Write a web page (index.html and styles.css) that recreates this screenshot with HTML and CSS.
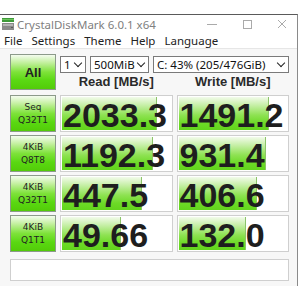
FILE: index.html
```html
<!DOCTYPE html>
<html lang="en">
<head>
    <meta charset="UTF-8">
    <title>CrystalDiskMark 6.0.1 x64</title>
    <link rel="stylesheet" href="styles.css">
</head>
<body>
    <div class="window">
        <div class="titlebar">
            <svg class="app-icon" width="12" height="12" viewBox="0 0 12 12">
                <rect x="0" y="0" width="12" height="4" fill="#3f9a3a"/>
                <rect x="0" y="1" width="12" height="1" fill="#6cc45c"/>
                <rect x="0" y="5" width="12" height="7" fill="#8a8a8a"/>
                <rect x="1" y="6" width="10" height="2" fill="#b4b4b4"/>
                <rect x="9" y="9" width="2" height="1" fill="#5a5a5a"/>
            </svg>
            <span class="title">CrystalDiskMark 6.0.1 x64</span>
            <div class="controls">
                <svg width="10" height="10" viewBox="0 0 10 10"><line x1="0" y1="5.5" x2="10" y2="5.5" stroke="#aaa" stroke-width="1"/></svg>
                <svg width="10" height="10" viewBox="0 0 10 10"><rect x="1.5" y="1.5" width="8" height="8" fill="none" stroke="#aaa" stroke-width="1"/></svg>
                <svg width="10" height="10" viewBox="0 0 10 10"><path d="M1 1 L9 9 M9 1 L1 9" stroke="#aaa" stroke-width="1"/></svg>
            </div>
        </div>

        <div class="menubar">
            <span>File</span>
            <span>Settings</span>
            <span>Theme</span>
            <span>Help</span>
            <span>Language</span>
        </div>

        <div class="main">
            <div class="top">
                <div class="btn all-btn">All</div>
                <div class="top-right">
                    <div class="selects">
                        <div class="select sel-count"><span>1</span><i class="chev"></i></div>
                        <div class="select sel-size"><span>500MiB</span><i class="chev"></i></div>
                        <div class="select sel-drive"><span>C: 43% (205/476GiB)</span><i class="chev"></i></div>
                    </div>
                    <div class="headers">
                        <div class="head">Read [MB/s]</div>
                        <div class="head">Write [MB/s]</div>
                    </div>
                </div>
            </div>

            <div class="rows">
                <div class="row">
                    <div class="btn label">Seq<br>Q32T1</div>
                    <div class="cell"><div class="bar" style="width: 86%"></div><span class="val">2033.3</span></div>
                    <div class="cell"><div class="bar" style="width: 82%"></div><span class="val">1491.2</span></div>
                </div>
                <div class="row">
                    <div class="btn label">4KiB<br>Q8T8</div>
                    <div class="cell"><div class="bar" style="width: 82%"></div><span class="val">1192.3</span></div>
                    <div class="cell"><div class="bar" style="width: 79%"></div><span class="val">931.4</span></div>
                </div>
                <div class="row">
                    <div class="btn label">4KiB<br>Q32T1</div>
                    <div class="cell"><div class="bar" style="width: 72%"></div><span class="val">447.5</span></div>
                    <div class="cell"><div class="bar" style="width: 71%"></div><span class="val">406.6</span></div>
                </div>
                <div class="row">
                    <div class="btn label">4KiB<br>Q1T1</div>
                    <div class="cell"><div class="bar" style="width: 53%"></div><span class="val">49.66</span></div>
                    <div class="cell"><div class="bar" style="width: 61%"></div><span class="val">132.0</span></div>
                </div>
            </div>

            <div class="comment"></div>
        </div>
    </div>
</body>
</html>
```

FILE: styles.css
```css
:root {
    --text-color: #1e1e1e;
    --cell-border: #cfcfcf;
    --window-bg: #f7f7f7;
}

body {
    margin: 0;
    padding: 0;
    background-color: #fff;
    font-family: 'Noto Sans', 'Liberation Sans', sans-serif;
    color: var(--text-color);
}

.window {
    margin-top: 14px;
    width: 297px;
    border-top: 1px solid #5a5a5a;
    border-right: 1px solid #8a8a8a;
    background-color: #fff;
}

.titlebar {
    height: 18px;
    display: flex;
    align-items: center;
    padding-left: 2px;
}

.app-icon {
    margin-right: 3px;
}

.title {
    font-size: 11.5px;
    color: #808080;
}

.controls {
    margin-left: auto;
    display: flex;
    gap: 25px;
    padding-right: 10px;
}

.menubar {
    height: 15px;
    display: flex;
    align-items: center;
    gap: 9px;
    padding-left: 4px;
    font-size: 11.5px;
    color: #222;
    border-bottom: 1px solid #e6e6e6;
}

.main {
    background-color: var(--window-bg);
    padding: 5px 8px 5px 10px;
}

.top {
    display: flex;
    gap: 4px;
    height: 36px;
}

.btn {
    box-sizing: border-box;
    border: 1px solid #8c9a8a;
    background: linear-gradient(to bottom, #f4fcef 0%, #c4f0a0 22%, #7ee23a 50%, #5ad812 75%, #52cc08 100%);
    display: flex;
    align-items: center;
    justify-content: center;
    text-align: center;
    color: #222;
}

.all-btn {
    width: 46px;
    font-family: 'Liberation Sans', Arial, sans-serif;
    font-weight: bold;
    font-size: 13px;
}

.top-right {
    flex: 1;
    display: flex;
    flex-direction: column;
}

.selects {
    display: flex;
    gap: 4px;
    margin-top: 2px;
    height: 17px;
}

.select {
    box-sizing: border-box;
    border: 1px solid #7a7a7a;
    background-color: #fff;
    display: flex;
    align-items: center;
    justify-content: space-between;
    padding: 0 3px 0 3px;
    font-size: 11.5px;
    color: #111;
}

.sel-count { width: 26px; }
.sel-size { width: 59px; }
.sel-drive { flex: 1; }

.chev {
    width: 5px;
    height: 5px;
    border-right: 1.5px solid #222;
    border-bottom: 1.5px solid #222;
    transform: rotate(45deg);
    margin: -3px 1px 0 0;
}

.headers {
    flex: 1;
    display: flex;
    gap: 4px;
}

.head {
    flex: 1;
    display: flex;
    align-items: center;
    justify-content: center;
    font-family: 'Liberation Sans', Arial, sans-serif;
    font-weight: bold;
    font-size: 13px;
    color: #2a2a2a;
}

.rows {
    margin-top: 5px;
    display: flex;
    flex-direction: column;
    gap: 3px;
}

.row {
    display: flex;
    gap: 4px;
    height: 37px;
}

.label {
    width: 46px;
    font-family: 'DejaVu Sans', Verdana, sans-serif;
    font-size: 9px;
    line-height: 13px;
}

.cell {
    flex: 1;
    position: relative;
    box-sizing: border-box;
    border: 1px solid var(--cell-border);
    background-color: #fff;
    display: flex;
    align-items: center;
}

.bar {
    position: absolute;
    left: 1px;
    top: 1px;
    bottom: 1px;
    box-sizing: border-box;
    border-right: 1px solid #8cc46a;
    background: linear-gradient(to bottom, #f2fbeb 0%, #c6efa6 25%, #8ee252 55%, #6cda26 80%, #62d41c 100%);
}

.val {
    position: relative;
    padding-left: 2px;
    font-family: 'Liberation Sans', Arial, sans-serif;
    font-weight: bold;
    font-size: 34px;
    line-height: 34px;
    margin-top: 2px;
    color: #1e1e1e;
    white-space: nowrap;
}

.comment {
    margin-top: 7px;
    height: 22px;
    box-sizing: border-box;
    border: 1px solid var(--cell-border);
    background-color: #fff;
}
```
